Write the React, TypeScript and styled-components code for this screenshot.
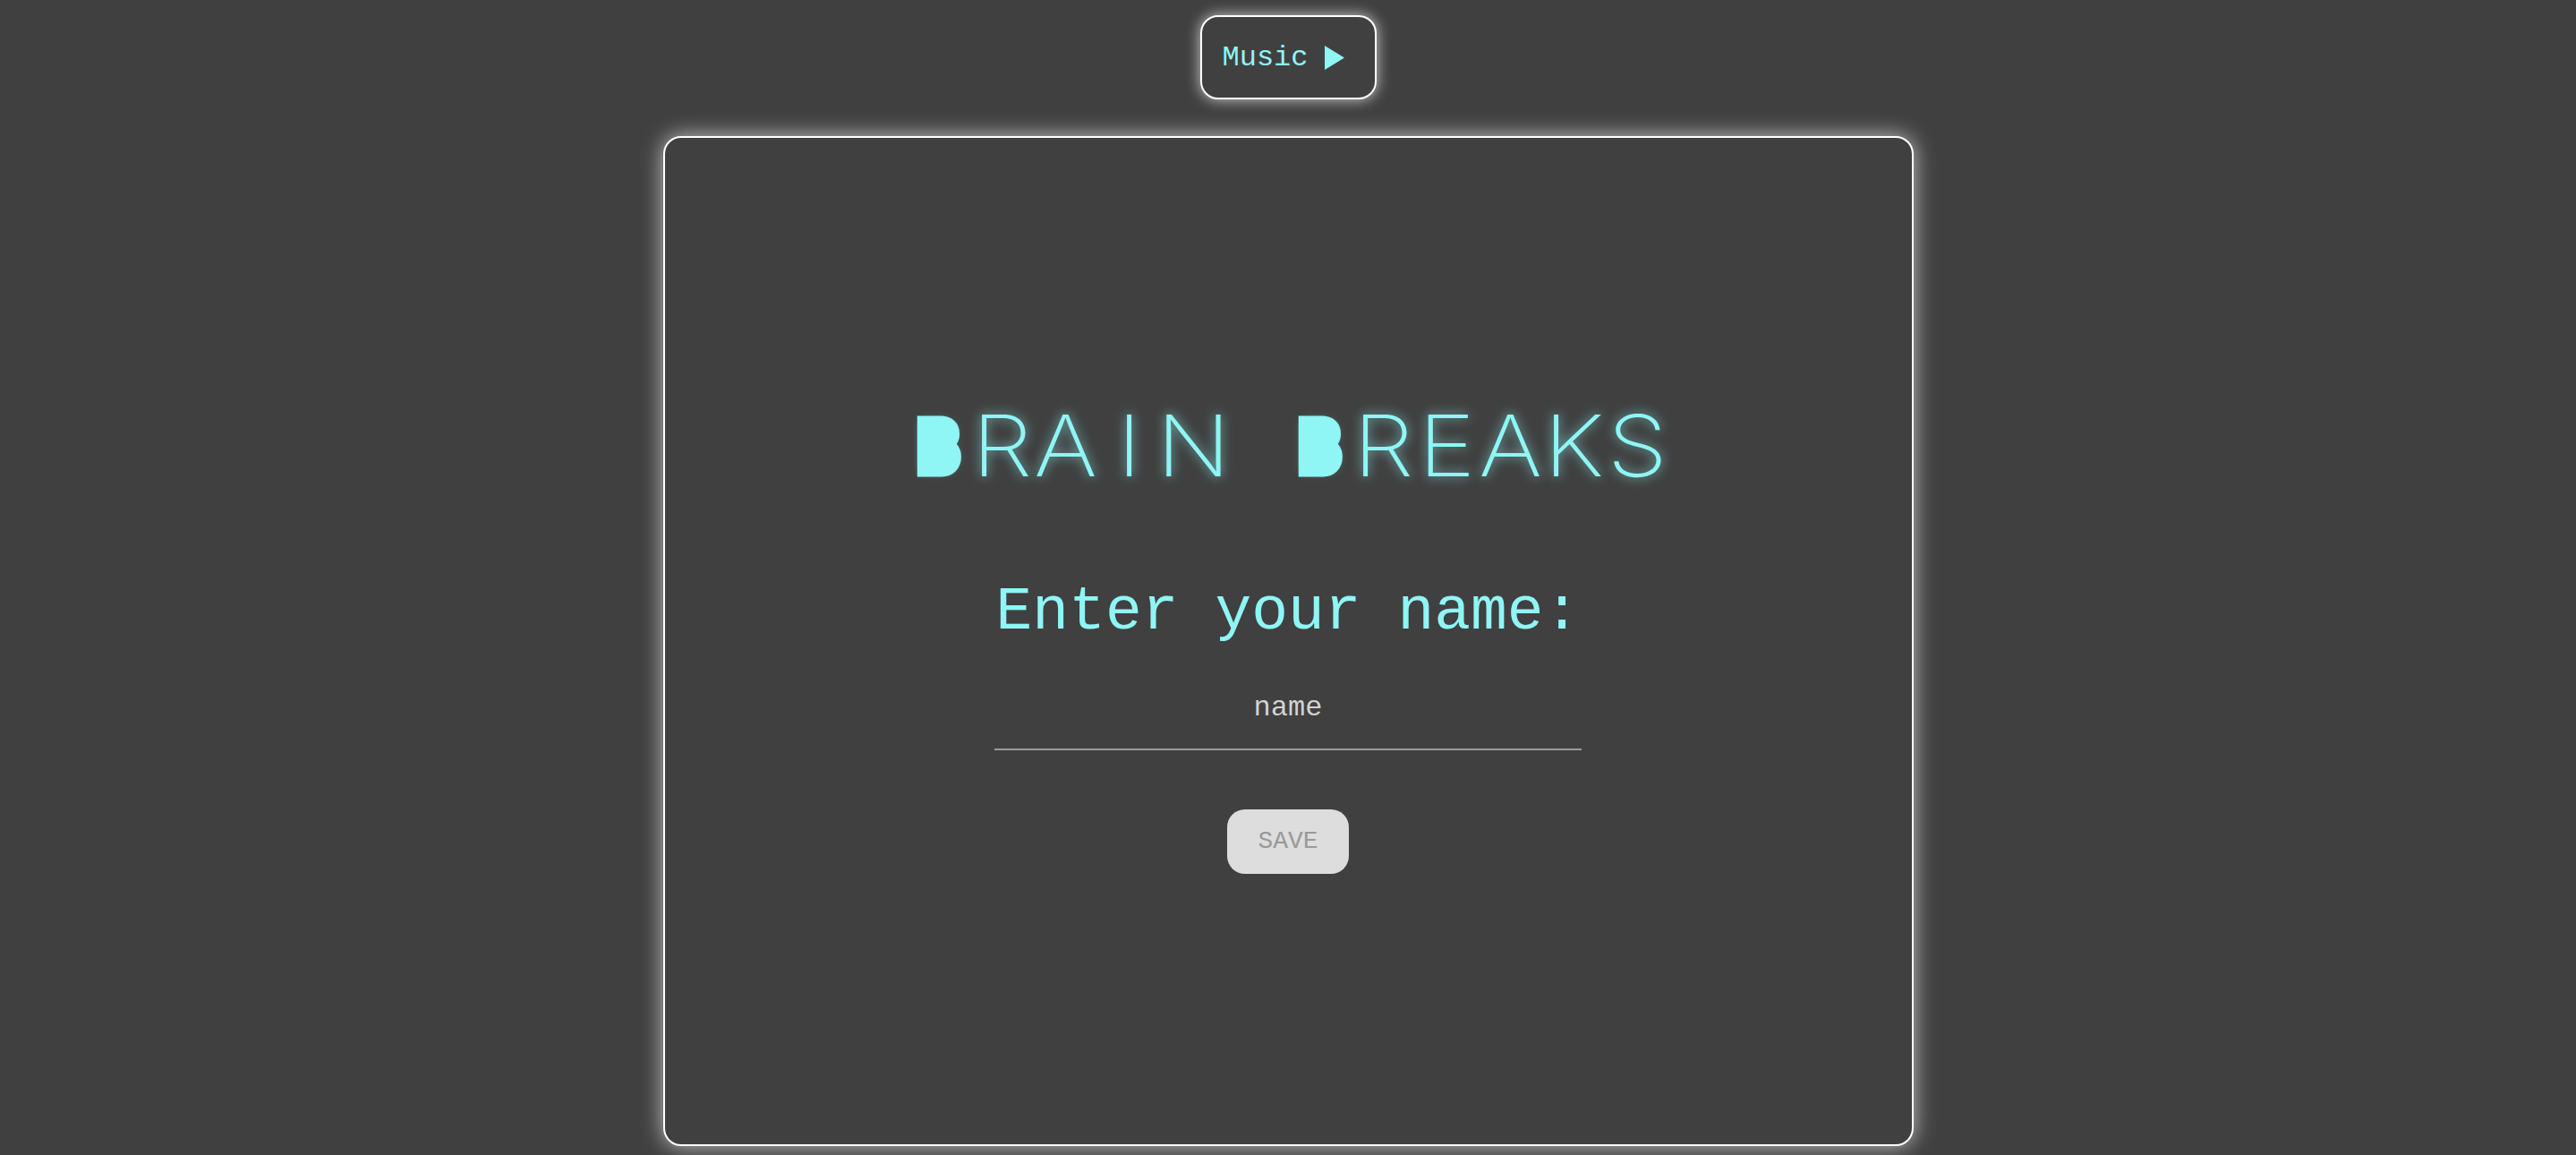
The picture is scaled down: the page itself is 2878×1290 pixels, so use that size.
import React from "react";
import styled, { createGlobalStyle } from "styled-components";

const GlobalStyle = createGlobalStyle`
  html, body {
    margin: 0;
    padding: 0;
    background: #404040;
  }
  * { box-sizing: border-box; }
`;

const CYAN = "#8ff5f5";

const Page = styled.div`
  min-height: 100vh;
  display: flex;
  flex-direction: column;
  align-items: center;
  padding-top: 17px;
  gap: 41px;
  background: #404040;
`;

const MusicButton = styled.button`
  width: 197px;
  height: 94px;
  display: flex;
  align-items: center;
  gap: 18px;
  padding: 0 0 0 23px;
  background: #404040;
  border: 2px solid #ffffff;
  border-radius: 20px;
  box-shadow: 0 0 16px rgba(255, 255, 255, 0.75);
  color: ${CYAN};
  font-family: "Liberation Mono", "DejaVu Sans Mono", monospace;
  font-size: 32px;
  cursor: pointer;
`;

const Card = styled.main`
  width: 1397px;
  height: 1128px;
  border: 2px solid #ffffff;
  border-radius: 20px;
  box-shadow: 0 0 24px rgba(255, 255, 255, 0.7);
  background: #404040;
  display: flex;
  flex-direction: column;
  align-items: center;
  justify-content: center;
  padding-bottom: 9px;
`;

const Title = styled.h1`
  margin: 0;
  display: flex;
  justify-content: center;
  font-family: Inter, "Noto Sans", sans-serif;
  font-size: 95px;
  line-height: 100px;
  color: ${CYAN};
  text-shadow: 0 0 12px rgba(143, 245, 245, 0.75);
`;

const Letter = styled.span<{ $bold?: boolean }>`
  display: inline-block;
  width: 71px;
  text-align: center;
  font-weight: ${(p) => (p.$bold ? 900 : 220)};
  -webkit-text-stroke: ${(p) => (p.$bold ? `13px ${CYAN}` : "0")};
  font-size: ${(p) => (p.$bold ? "76px" : "95px")};
  transform: ${(p) => (p.$bold ? "scaleX(0.84)" : "scaleX(1.14)")};
`;

const Heading = styled.h2`
  margin: 97px 0 0;
  font-family: "Liberation Mono", "DejaVu Sans Mono", monospace;
  font-weight: 400;
  font-size: 68px;
  line-height: 77px;
  color: ${CYAN};
`;

const NameInput = styled.input`
  margin-top: 41px;
  width: 656px;
  padding: 10px 0 27px;
  background: transparent;
  border: none;
  border-bottom: 2px solid #9a9a9a;
  outline: none;
  text-align: center;
  font-family: "Liberation Mono", "DejaVu Sans Mono", monospace;
  font-size: 32px;
  line-height: 36px;
  color: #d6d6d6;
  &::placeholder {
    color: #d2d2d2;
    opacity: 1;
  }
`;

const SaveButton = styled.button`
  margin-top: 66px;
  width: 136px;
  height: 72px;
  border: none;
  border-radius: 20px;
  background: #dddddd;
  color: #999999;
  font-family: "Liberation Mono", "DejaVu Sans Mono", monospace;
  font-weight: 400;
  font-size: 28px;
`;

const Play = () => (
  <svg width="22" height="27" viewBox="0 0 22 27" aria-hidden="true">
    <polygon points="0,0 22,13.5 0,27" fill={CYAN} />
  </svg>
);

export default function App() {
  const title = "BRAIN BREAKS";
  return (
    <>
      <GlobalStyle />
      <Page>
        <MusicButton>
          <span>Music</span>
          <Play />
        </MusicButton>
        <Card>
          <Title>
            {title.split("").map((ch, i) => (
              <Letter key={i} $bold={i === 0 || i === 6}>
                {ch === " " ? "\u00a0" : ch}
              </Letter>
            ))}
          </Title>
          <Heading>Enter your name:</Heading>
          <NameInput placeholder="name" />
          <SaveButton disabled>SAVE</SaveButton>
        </Card>
      </Page>
    </>
  );
}
